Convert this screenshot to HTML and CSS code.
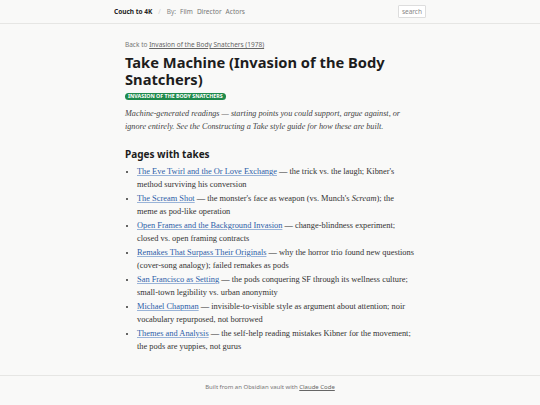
FILE: index.html
```html
<!DOCTYPE html>
<html>
<head>
<meta charset="utf-8">
<link rel="stylesheet" href="styles.css">
</head>
<body>
<header class="topbar">
  <div class="topbar-inner">
    <nav class="nav">
      <a class="brand" href="#">Couch to 4K</a>
      <span class="sep">/</span>
      <span class="by">By:</span>
      <a class="navlink" href="#">Film</a>
      <a class="navlink" href="#">Director</a>
      <a class="navlink" href="#">Actors</a>
    </nav>
    <span class="search">search</span>
  </div>
</header>
<main class="content">
  <p class="back">Back to <a href="#">Invasion of the Body Snatchers (1978)</a></p>
  <h1 class="title">Take Machine (Invasion of the Body Snatchers)</h1>
  <div class="tags"><span class="badge">INVASION OF THE BODY SNATCHERS</span></div>
  <p class="intro">Machine-generated readings — starting points you could support, argue against, or ignore entirely. See the Constructing a Take style guide for how these are built.</p>
  <h2 class="section">Pages with takes</h2>
  <ul class="takes">
    <li><a href="#">The Eve Twirl and the Or Love Exchange</a> — the trick vs. the laugh; Kibner's method surviving his conversion</li>
    <li><a href="#">The Scream Shot</a> — the monster's face as weapon (vs. Munch's <em>Scream</em>); the meme as pod-like operation</li>
    <li><a href="#">Open Frames and the Background Invasion</a> — change-blindness experiment; closed vs. open framing contracts</li>
    <li><a href="#">Remakes That Surpass Their Originals</a> — why the horror trio found new questions (cover-song analogy); failed remakes as pods</li>
    <li><a href="#">San Francisco as Setting</a> — the pods conquering SF through its wellness culture; small-town legibility vs. urban anonymity</li>
    <li><a href="#">Michael Chapman</a> — invisible-to-visible style as argument about attention; noir vocabulary repurposed, not borrowed</li>
    <li><a href="#">Themes and Analysis</a> — the self-help reading mistakes Kibner for the movement; the pods are yuppies, not gurus</li>
  </ul>
</main>
<footer class="footer">
  <p>Built from an Obsidian vault with <a href="#">Claude Code</a></p>
</footer>
</body>
</html>
```
FILE: styles.css
```css
html, body {
  margin: 0;
  padding: 0;
  background: #f9f9f8;
  color: #222;
}
body {
  font-family: "Liberation Serif", serif;
  height: 405px;
  display: flex;
  flex-direction: column;
}
a { color: inherit; }
.topbar {
  border-bottom: 1px solid #e6e6e4;
  height: 23px;
  flex: none;
  font-family: "Noto Sans", sans-serif;
  font-size: 6.5px;
}
.topbar-inner {
  width: 312px;
  margin: 0 auto;
  height: 100%;
  display: flex;
  align-items: center;
  justify-content: space-between;
}
.nav {
  display: flex;
  align-items: center;
  gap: 4px;
}
.brand {
  font-weight: 700;
  color: #222;
  text-decoration: none;
  margin-right: 2px;
}
.sep { color: #ccc; margin-right: 2px; }
.by { color: #888; }
.navlink { color: #777; text-decoration: none; }
.search {
  border: 1px solid #ddd;
  background: #fff;
  color: #888;
  padding: 1px 3px;
  border-radius: 1px;
}
.content {
  width: 290px;
  margin: 0 auto;
  flex: 1;
  padding-top: 16px;
}
.back {
  font-family: "Noto Sans", sans-serif;
  font-size: 6.5px;
  line-height: 9px;
  color: #777;
  margin: 0 0 5px;
}
.back a { color: #666; }
.title {
  font-family: "Noto Sans", sans-serif;
  font-size: 14.7px;
  line-height: 17px;
  font-weight: 700;
  margin: 0 0 5px;
  color: #1d1d1d;
}
.tags {
  display: flex;
}
.badge {
  background: #1f8a4c;
  color: #fff;
  font-family: "Noto Sans", sans-serif;
  font-weight: 700;
  font-size: 5.3px;
  line-height: 7px;
  padding: 0 3px;
  border-radius: 4px;
}
.intro {
  font-style: italic;
  font-size: 8.2px;
  line-height: 13px;
  color: #444;
  margin: 7px 0 0;
}
.section {
  font-family: "Noto Sans", sans-serif;
  font-size: 10px;
  line-height: 14px;
  font-weight: 700;
  margin: 14px 0 4px;
  color: #1d1d1d;
}
.takes {
  margin: 0;
  padding-left: 12px;
  font-size: 8.4px;
  line-height: 13px;
  color: #333;
}
.takes li { margin-bottom: 1px; }
.takes a { color: #2c5ea8; text-decoration-color: #9ab4d8; }
.footer {
  border-top: 1px solid #e6e6e4;
  height: 30px;
  flex: none;
  display: flex;
  justify-content: center;
  padding-top: 7px;
  box-sizing: border-box;
  font-family: "Noto Sans", sans-serif;
  font-size: 6px;
  line-height: 9px;
  color: #777;
}
.footer p { margin: 0; }
.footer a { color: #666; }
```
